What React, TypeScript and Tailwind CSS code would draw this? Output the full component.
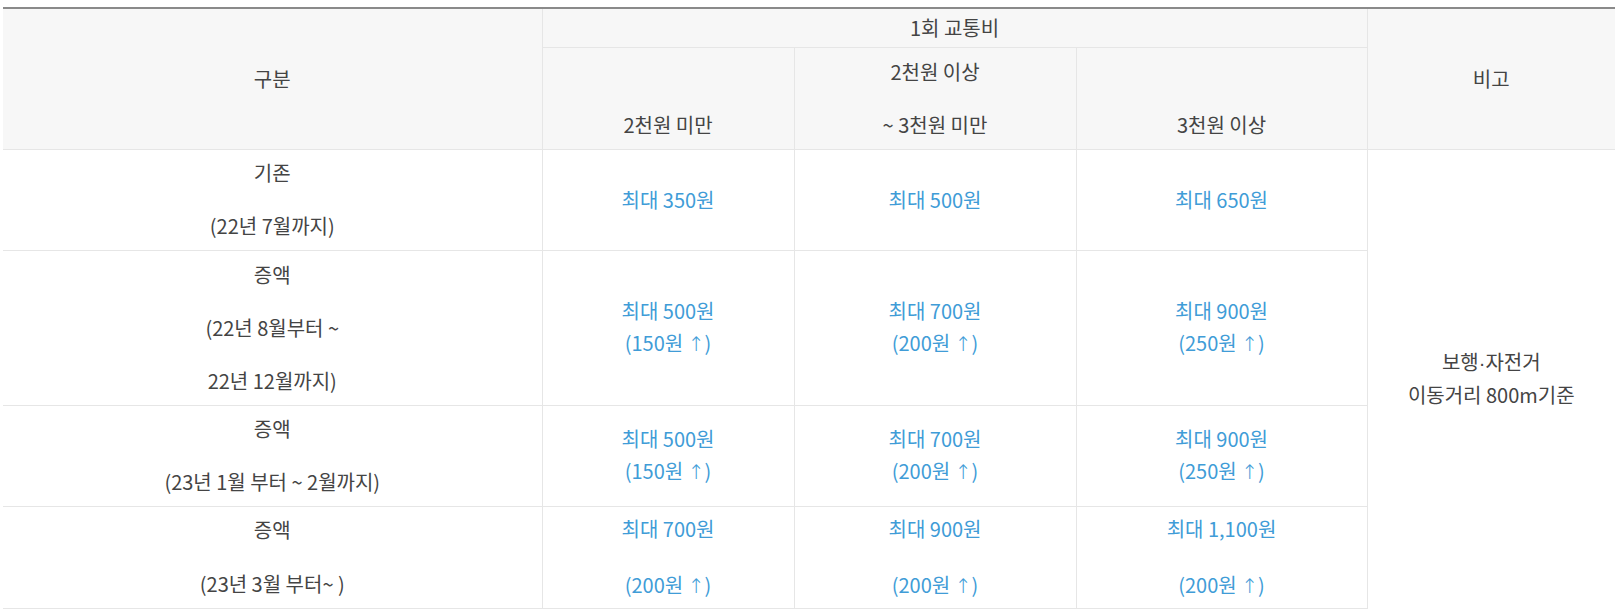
const FONT = "font-['Noto_Sans_CJK_KR','Noto_Sans',sans-serif]";

const TH = "bg-[#f7f7f7] border-b border-r border-[#e6e6e6] text-center align-middle font-normal p-0";
const TD = "border-b border-r border-[#e6e6e6] text-center align-middle p-0";

// narrow glyphs (arrow, middle dot) come from a latin font, as in the original page
function renderText(text: string) {
  const parts = text.split(/([↑·])/);
  return parts.map((p, i) => {
    if (p === "↑")
      return (
        <span key={i} className="font-['DejaVu_Sans',sans-serif] font-extralight">
          {p}
        </span>
      );
    if (p === "·")
      return (
        <span key={i} className="font-['Liberation_Sans',sans-serif]">
          {p}
        </span>
      );
    return p;
  });
}

function Lines({ lines, gap = "gap-[21px]", blue = false }: { lines: string[]; gap?: string; blue?: boolean }) {
  return (
    <div className={`flex flex-col items-center ${gap} ${blue ? "text-[#409cd7]" : "text-[#444]"}`}>
      {lines.map((line, i) => (
        <div key={i} className="leading-[32px] whitespace-pre">
          {line ? renderText(line) : "\u00a0"}
        </div>
      ))}
    </div>
  );
}

const ROWS = [
  {
    h: "h-[101px]",
    label: ["기존", "(22년 7월까지)"],
    labelGap: "gap-[21px]",
    values: [["최대 350원"], ["최대 500원"], ["최대 650원"]],
    valueGap: "gap-0",
  },
  {
    h: "h-[155px]",
    label: ["증액", "(22년 8월부터 ~", "22년 12월까지)"],
    labelGap: "gap-[21px]",
    values: [
      ["최대 500원", "(150원 ↑)"],
      ["최대 700원", "(200원 ↑)"],
      ["최대 900원", "(250원 ↑)"],
    ],
    valueGap: "gap-0",
  },
  {
    h: "h-[101px]",
    label: ["증액", "(23년 1월 부터 ~ 2월까지)"],
    labelGap: "gap-[21px]",
    values: [
      ["최대 500원", "(150원 ↑)"],
      ["최대 700원", "(200원 ↑)"],
      ["최대 900원", "(250원 ↑)"],
    ],
    valueGap: "gap-0",
  },
  {
    h: "h-[102px]",
    label: ["증액", "(23년 3월 부터~ )"],
    labelGap: "gap-[22px]",
    values: [
      ["최대 700원", "(200원 ↑)"],
      ["최대 900원", "(200원 ↑)"],
      ["최대 1,100원", "(200원 ↑)"],
    ],
    valueGap: "gap-[24px]",
  },
];

export default function App() {
  return (
    <div className={`bg-white w-[1615px] h-[615px] pt-[7px] pl-[3px] ${FONT} text-[20px] text-[#444]`}>
      <table className="w-[1612px] table-fixed border-collapse border-t-2 border-t-[#8a8a8a]">
        <colgroup>
          <col className="w-[539px]" />
          <col className="w-[252px]" />
          <col className="w-[282px]" />
          <col className="w-[291px]" />
          <col className="w-[248px]" />
        </colgroup>
        <thead>
          <tr className="h-[39px]">
            <th rowSpan={2} className={TH}>
              <Lines lines={["구분"]} />
            </th>
            <th colSpan={3} className={TH}>
              <Lines lines={["1회 교통비"]} />
            </th>
            <th rowSpan={2} className={`${TH} border-r-0`}>
              <Lines lines={["비고"]} />
            </th>
          </tr>
          <tr className="h-[102px]">
            <th className={TH}>
              <Lines lines={["", "2천원 미만"]} />
            </th>
            <th className={TH}>
              <Lines lines={["2천원 이상", "~ 3천원 미만"]} />
            </th>
            <th className={TH}>
              <Lines lines={["", "3천원 이상"]} />
            </th>
          </tr>
        </thead>
        <tbody>
          {ROWS.map((row, r) => (
            <tr key={r} className={row.h}>
              <td className={TD}>
                <Lines lines={row.label} gap={row.labelGap} />
              </td>
              {row.values.map((v, i) => (
                <td key={i} className={TD}>
                  <Lines lines={v} gap={row.valueGap} blue />
                </td>
              ))}
              {r === 0 && (
                <td rowSpan={4} className="p-0 text-center align-middle">
                  <Lines lines={["보행·자전거", "이동거리 800m기준"]} gap="gap-0" />
                </td>
              )}
            </tr>
          ))}
        </tbody>
      </table>
    </div>
  );
}
